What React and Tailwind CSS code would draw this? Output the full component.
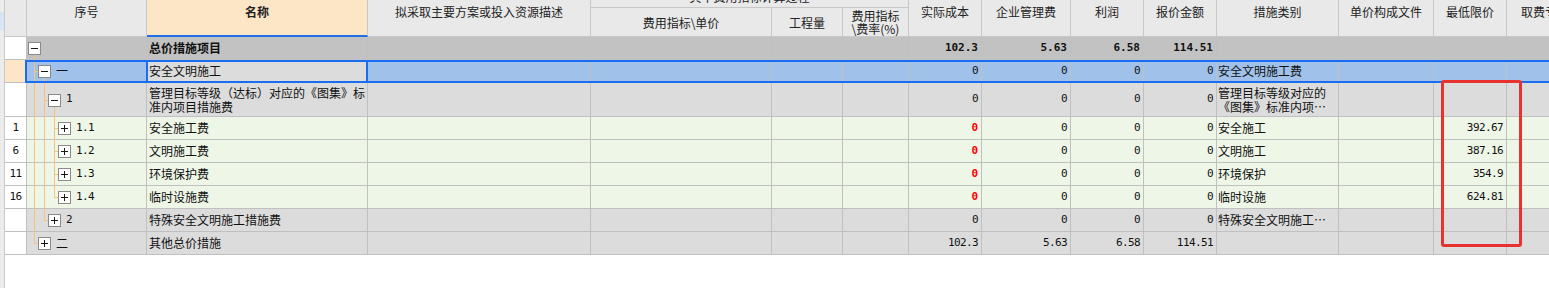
import React from 'react';

const LINE = '#f7c27b';
const MONO = "font-['DejaVu_Sans_Mono',monospace] text-[11px] tracking-[-0.6px]";
const MONOB = "font-['DejaVu_Sans_Mono',monospace] text-[11px] font-bold";

const ZERO4 = ['0', '0', '0', '0'];
const TOTAL = ['102.3', '5.63', '6.58', '114.51'];

const ROWS = [
  { h: 'h-[23px]', H: 22, bg: 'bg-[#c2c2c2]', rnBg: 'bg-white', rn: '', level: 0, box: 'minus', code: '', name: ['总价措施项目'], bold: true, segs: [['down', 0]], vals: TOTAL, cat: [], low: '' },
  { h: 'h-[23px]', H: 22, bg: 'bg-[#9fc1ea]', rnBg: 'bg-[#fde6c8]', rn: '', level: 1, box: 'minus', code: '一', cjkCode: true, name: ['安全文明施工'], selected: true, segs: [['mid', 0], ['down', 1]], vals: ZERO4, cat: ['安全文明施工费'], low: '' },
  { h: 'h-[34px]', H: 33, bg: 'bg-[#dcdcdc]', rnBg: 'bg-white', rn: '', level: 2, box: 'minus', code: '1', name: ['管理目标等级（达标）对应的《图集》标', '准内项目措施费'], segs: [['full', 0], ['mid', 1], ['down', 2]], vals: ZERO4, cat: ['管理目标等级对应的', '《图集》标准内项…'], low: '' },
  { h: 'h-[23px]', H: 22, bg: 'bg-[#edf6e7]', rnBg: 'bg-white', rn: '1', level: 3, box: 'plus', code: '1.1', name: ['安全施工费'], segs: [['full', 0], ['full', 1], ['mid', 2]], vals: ZERO4, red: true, cat: ['安全施工'], low: '392.67' },
  { h: 'h-[23px]', H: 22, bg: 'bg-[#edf6e7]', rnBg: 'bg-white', rn: '6', level: 3, box: 'plus', code: '1.2', name: ['文明施工费'], segs: [['full', 0], ['full', 1], ['mid', 2]], vals: ZERO4, red: true, cat: ['文明施工'], low: '387.16' },
  { h: 'h-[23px]', H: 22, bg: 'bg-[#edf6e7]', rnBg: 'bg-white', rn: '11', level: 3, box: 'plus', code: '1.3', name: ['环境保护费'], segs: [['full', 0], ['full', 1], ['mid', 2]], vals: ZERO4, red: true, cat: ['环境保护'], low: '354.9' },
  { h: 'h-[23px]', H: 22, bg: 'bg-[#edf6e7]', rnBg: 'bg-white', rn: '16', level: 3, box: 'plus', code: '1.4', name: ['临时设施费'], segs: [['full', 0], ['full', 1], ['last', 2]], vals: ZERO4, red: true, cat: ['临时设施'], low: '624.81' },
  { h: 'h-[23px]', H: 22, bg: 'bg-[#dcdcdc]', rnBg: 'bg-white', rn: '', level: 2, box: 'plus', code: '2', name: ['特殊安全文明施工措施费'], segs: [['full', 0], ['last', 1]], vals: ZERO4, cat: ['特殊安全文明施工…'], low: '' },
  { h: 'h-[23px]', H: 22, bg: 'bg-[#dcdcdc]', rnBg: 'bg-white', rn: '', level: 1, box: 'plus', code: '二', cjkCode: true, name: ['其他总价措施'], segs: [['last', 0]], vals: TOTAL, cat: [], low: '' },
];

function Tree({ level, box, H, segs }) {
  const cy = Math.round(H / 2);
  const bx = 1 + 10 * level;
  const w = bx + 13;
  const lines = [];
  segs.forEach(([t, c], i) => {
    const x = 10 * c + 7.5;
    if (t === 'full' || t === 'mid') lines.push(<line key={i + 'a'} x1={x} x2={x} y1={0} y2={H + 1} />);
    if (t === 'last') lines.push(<line key={i + 'b'} x1={x} x2={x} y1={0} y2={cy + 1} />);
    if (t === 'mid' || t === 'last') lines.push(<line key={i + 'c'} x1={10 * c + 8} x2={10 * c + 11} y1={cy + 0.5} y2={cy + 0.5} />);
    if (t === 'down') lines.push(<line key={i + 'd'} x1={x} x2={x} y1={cy + 7} y2={H + 1} />);
  });
  return (
    <svg width={w} height={H} className="shrink-0" style={{ overflow: 'visible' }} shapeRendering="crispEdges">
      <g stroke={LINE} strokeWidth="1">{lines}</g>
      <rect x={bx + 0.5} y={cy - 6 + 0.5} width={12} height={12} fill="#fff" stroke="#8a8a8a" />
      <line x1={bx + 3} x2={bx + 10} y1={cy + 0.5} y2={cy + 0.5} stroke="#1a1a1a" />
      {box === 'plus' && <line x1={bx + 6.5} x2={bx + 6.5} y1={cy - 3} y2={cy + 4} stroke="#1a1a1a" />}
    </svg>
  );
}

const HC = 'shrink-0 h-full border-r border-b border-[#c8c8c8] bg-[#e9e9e9] text-center pt-[5px] leading-[14px] text-[#222] whitespace-nowrap overflow-hidden';
const SUB = 'shrink-0 h-full border-r border-b border-[#c8c8c8] bg-[#e9e9e9] flex items-center justify-center text-center leading-[13px] text-[#222] whitespace-nowrap';

function Header() {
  return (
    <div className="flex h-[37px]">
      <div className={HC + ' w-[22px]'}></div>
      <div className={HC + ' w-[120px]'}>序号</div>
      <div className="shrink-0 h-full w-[221px] border-r border-[#c8c8c8] border-b-2 border-b-[#1f6fe6] bg-[#fde6c6] text-center pt-[5px] leading-[14px] font-bold text-[#222]">名称</div>
      <div className={HC + ' w-[223px]'}>拟采取主要方案或投入资源描述</div>
      <div className="shrink-0 w-[318px] h-full flex flex-col">
        <div className="h-[8px] border-r border-b border-[#c8c8c8] bg-[#e9e9e9] overflow-hidden text-center text-[#222]">
          <div className="-mt-[9px] leading-[12px]">其中费用指标计算过程</div>
        </div>
        <div className="flex flex-1">
          <div className={SUB + ' w-[181px]'}>费用指标\单价</div>
          <div className={SUB + ' w-[71px]'}>工程量</div>
          <div className={SUB + ' w-[66px]'}>
            <div>费用指标<br />\费率(%)</div>
          </div>
        </div>
      </div>
      <div className={HC + ' w-[73px]'}>实际成本</div>
      <div className={HC + ' w-[89px]'}>企业管理费</div>
      <div className={HC + ' w-[73px]'}>利润</div>
      <div className={HC + ' w-[73px]'}>报价金额</div>
      <div className={HC + ' w-[122px]'}>措施类别</div>
      <div className={HC + ' w-[95px]'}>单价构成文件</div>
      <div className={HC + ' w-[73px]'}>最低限价</div>
      <div className={HC + ' w-[77px]'}>取费专业</div>
    </div>
  );
}

const C = 'shrink-0 h-full border-r border-b border-[#c0c0c0]';

function Num({ v, bold, red, w }) {
  return (
    <div className={`${C} ${w} flex items-center justify-end pr-[3px] ${bold || red ? MONOB : MONO} ${red ? 'text-[#ff0000]' : 'text-[#111]'}`}>
      {v}
    </div>
  );
}

function Row({ r }) {
  const valW = ['w-[73px]', 'w-[89px]', 'w-[73px]', 'w-[73px]'];
  return (
    <div className={`relative flex ${r.h} ${r.bg}`}>
      <div className={`${C} w-[22px] ${r.rnBg} flex items-center justify-center ${MONO}`}>{r.rn}</div>
      <div className={`${C} w-[120px] flex items-center`}>
        <Tree level={r.level} box={r.box} H={r.H} segs={r.segs} />
        {r.code && (
          <span className={`ml-[5px] ${r.cjkCode ? '' : MONO}`}>{r.code}</span>
        )}
      </div>
      <div className={`${C} w-[221px] flex items-center pl-[2px] ${r.selected ? 'bg-[#dcdcdc]' : ''} ${r.bold ? 'font-bold' : ''}`}>
        <div className="leading-[14px] whitespace-nowrap">
          {r.name.map((t, i) => (
            <div key={i}>{t}</div>
          ))}
        </div>
      </div>
      <div className={`${C} w-[223px]`}></div>
      <div className={`${C} w-[181px]`}></div>
      <div className={`${C} w-[71px]`}></div>
      <div className={`${C} w-[66px]`}></div>
      {r.vals.map((v, i) => (
        <Num key={i} v={v} w={valW[i]} bold={r.bold} red={r.red && i === 0} />
      ))}
      <div className={`${C} w-[122px] flex items-center pl-[1px] overflow-hidden`}>
        <div className="leading-[14px] whitespace-nowrap">
          {r.cat.map((t, i) => (
            <div key={i}>{t}</div>
          ))}
        </div>
      </div>
      <div className={`${C} w-[95px]`}></div>
      <Num v={r.low} w="w-[73px]" />
      <div className={`${C} w-[77px]`}></div>
      {r.selected && (
        <>
          <div className="absolute left-[20px] -right-[40px] top-0 bottom-0 border-2 border-[#1a6df0] pointer-events-none"></div>
          <div className="absolute left-[141px] w-[222px] top-0 bottom-0 border-2 border-[#1a6df0] pointer-events-none"></div>
        </>
      )}
    </div>
  );
}

export default function App() {
  return (
    <div className="relative w-[1549px] h-[288px] overflow-hidden bg-white flex font-['Noto_Sans_CJK_SC',sans-serif] text-[12px] text-[#111]">
      <div className="w-[5px] shrink-0 border-r border-[#c9c9c9] bg-[#ececec] flex flex-col">
        <div className="h-[12px]"></div>
        <div className="h-[18px] bg-[#d6e4f4]"></div>
      </div>
      <div className="flex-1 min-w-0 overflow-hidden">
        <div className="w-[1620px]">
          <Header />
          {ROWS.map((r, i) => (
            <Row key={i} r={r} />
          ))}
        </div>
      </div>
      <div className="absolute left-[1441px] top-[80px] w-[81px] h-[167px] border-[3px] border-[#e8322f] rounded-[3px] pointer-events-none"></div>
    </div>
  );
}
